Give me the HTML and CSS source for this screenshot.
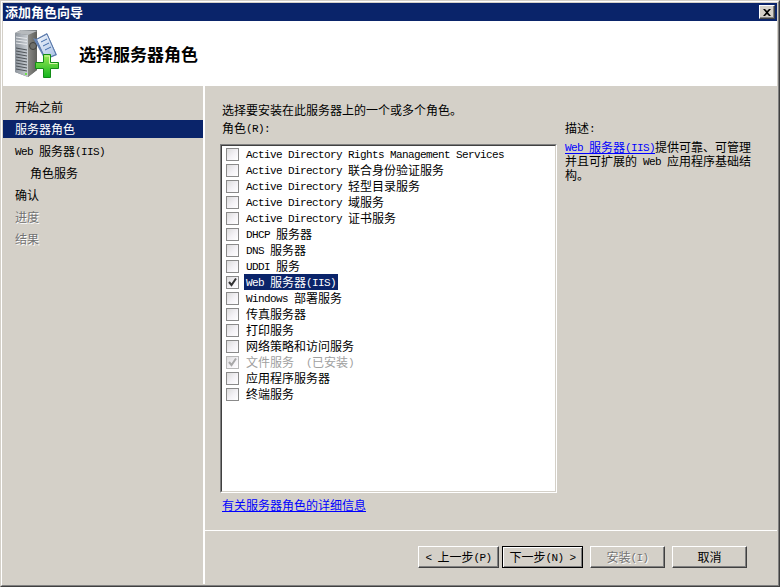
FILE: index.html
```html
<!DOCTYPE html>
<html lang="zh-CN">
<head>
<meta charset="utf-8">
<title>添加角色向导</title>
<link rel="stylesheet" href="styles.css">
</head>
<body>
<div class="window">
  <div class="window-inner">
    <div class="titlebar">
      <span class="title">添加角色向导</span>
      <button class="close" type="button" aria-label="关闭">
        <svg width="8" height="7" viewBox="0 0 8 7"><path d="M0 0h2l2 2 2-2h2L5 3.500 8 7H6L4 5 2 7H0l3-3.500z" fill="#000"/></svg>
      </button>
    </div>
    <header class="header">
      <svg class="logo" width="55" height="58" viewBox="10 25 55 58">
        <defs>
          <linearGradient id="front" x1="0" y1="0" x2="1" y2="0"><stop offset="0" stop-color="#8d949c"/><stop offset="1" stop-color="#c9ced3"/></linearGradient>
          <linearGradient id="side" x1="0" y1="0" x2="1" y2="0"><stop offset="0" stop-color="#8a8a86"/><stop offset="1" stop-color="#5f605c"/></linearGradient>
          <linearGradient id="green" x1="0" y1="0" x2="0" y2="1"><stop offset="0" stop-color="#9bea55"/><stop offset="1" stop-color="#14b51e"/></linearGradient>
          <linearGradient id="tag" x1="0" y1="0" x2="1" y2="1"><stop offset="0" stop-color="#f2f6fc"/><stop offset="1" stop-color="#a9c1e4"/></linearGradient>
        </defs>
        <path d="M15 33 21 30 37 30 37 70 28 77 15 72z" fill="#70767c"/>
        <path d="M15 33 28 35 28 77 15 72z" fill="url(#front)"/>
        <path d="M28 35 37 31 37 70 28 77z" fill="url(#side)"/>
        <path d="M15 33 21 30 37 31 28 35z" fill="#b6babd"/>
        <path d="M16 37 27 38.500M16 40 27 41.500M16 43 27 44.500" stroke="#e7e9ec" fill="none"/>
        <path d="M16 48 27 50M16 51 27 53M16 54 27 56M16 57 27 59M16 60 27 62M16 63 27 65M16 66 27 68M16 69 27 71" stroke="#4f5459" fill="none"/>
        <rect x="25" y="73" width="2" height="2" fill="#6fe04a"/>
        <circle cx="33" cy="46" r="3.500" fill="#6e6f6b" stroke="#3f403d"/>
        <path d="M33 38 36 39 47 33 57 55 45 60z" fill="#6684b4"/>
        <path d="M36.500 39.500 47 34 56 54.500 45.500 59z" fill="url(#tag)" stroke="#5a79ab"/>
        <path d="M41 42 47 39M43 46 49 43M45 50 51 47" stroke="#3f6aa8" fill="none"/>
        <path d="M43.500 54.500H50.500V62.500H58.500V68.500H50.500V77.500H43.500V68.500H35.500V62.500H43.500z" fill="url(#green)" stroke="#128c16"/>
        <path d="M44.500 56H49.500V63.500H57.500" fill="none" stroke="#d6f7a8"/>
      </svg>
      <h1 class="heading">选择服务器角色</h1>
    </header>
    <div class="body">
      <nav class="sidebar">
        <div class="step">开始之前</div>
        <div class="step is-current">服务器角色</div>
        <div class="step"><span class="en">Web </span>服务器<span class="en">(IIS)</span></div>
        <div class="step is-sub">角色服务</div>
        <div class="step">确认</div>
        <div class="step is-off">进度</div>
        <div class="step is-off">结果</div>
      </nav>
      <main class="main">
        <div class="content">
          <div class="left">
            <div class="intro">选择要安装在此服务器上的一个或多个角色。</div>
            <div class="intro roles-label">角色<span class="en">(R):</span></div>
            <div class="listbox">
              <div class="listbox-inner">
                <div class="row"><span class="check"></span><span class="label"><span class="en">Active Directory Rights Management Services</span></span></div>
                <div class="row"><span class="check"></span><span class="label"><span class="en">Active Directory </span>联合身份验证服务</span></div>
                <div class="row"><span class="check"></span><span class="label"><span class="en">Active Directory </span>轻型目录服务</span></div>
                <div class="row"><span class="check"></span><span class="label"><span class="en">Active Directory </span>域服务</span></div>
                <div class="row"><span class="check"></span><span class="label"><span class="en">Active Directory </span>证书服务</span></div>
                <div class="row"><span class="check"></span><span class="label"><span class="en">DHCP </span>服务器</span></div>
                <div class="row"><span class="check"></span><span class="label"><span class="en">DNS </span>服务器</span></div>
                <div class="row"><span class="check"></span><span class="label"><span class="en">UDDI </span>服务</span></div>
                <div class="row"><span class="check"><svg class="tick" width="11" height="11" viewBox="0 0 11 11"><path d="M2 5 4.500 8 9 1.500" fill="none" stroke="#333" stroke-width="2"/></svg></span><span class="label is-selected"><span class="en">Web </span>服务器<span class="en">(IIS)</span></span></div>
                <div class="row"><span class="check"></span><span class="label"><span class="en">Windows </span>部署服务</span></div>
                <div class="row"><span class="check"></span><span class="label">传真服务器</span></div>
                <div class="row"><span class="check"></span><span class="label">打印服务</span></div>
                <div class="row"><span class="check"></span><span class="label">网络策略和访问服务</span></div>
                <div class="row is-disabled"><span class="check"><svg class="tick" width="11" height="11" viewBox="0 0 11 11"><path d="M2 5 4.500 8 9 1.500" fill="none" stroke="#a8a8a8" stroke-width="2"/></svg></span><span class="label">文件服务<span class="en">  (</span>已安装<span class="en">)</span></span></div>
                <div class="row"><span class="check"></span><span class="label">应用程序服务器</span></div>
                <div class="row"><span class="check"></span><span class="label">终端服务</span></div>
              </div>
            </div>
            <a class="link more" href="#">有关服务器角色的详细信息</a>
          </div>
          <aside class="desc">
            <div>描述<span class="en">:</span></div>
            <p class="desc-text"><a class="link" href="#"><span class="en">Web </span>服务器<span class="en">(IIS)</span></a>提供可靠、可管理<br>并且可扩展的<span class="en"> Web </span>应用程序基础结<br>构。</p>
          </aside>
        </div>
        <footer class="footer">
          <button class="btn btn-wide" type="button"><span class="en">&lt; </span>上一步<span class="en">(P)</span></button>
          <button class="btn btn-wide btn-default" type="button">下一步<span class="en">(N) &gt;</span></button>
          <button class="btn btn-disabled" type="button">安装<span class="en">(I)</span></button>
          <button class="btn" type="button">取消</button>
        </footer>
      </main>
    </div>
  </div>
</div>
</body>
</html>
```
FILE: styles.css
```css
* { box-sizing: border-box; }
html, body { margin: 0; padding: 0; }
body {
  width: 780px;
  height: 587px;
  overflow: hidden;
  background: #d4d0c8;
  color: #000;
  font: 12px/14px "Noto Sans CJK SC", "Liberation Sans", sans-serif;
}
.en {
  font-family: "Liberation Mono", monospace;
  font-size: 11px;
  line-height: 1;
  letter-spacing: -0.6px;
  white-space: pre;
  vertical-align: 1px;
}
.window {
  width: 780px;
  height: 587px;
  border: 1px solid;
  border-color: #d4d0c8 #404040 #404040 #d4d0c8;
}
.window-inner {
  height: 100%;
  border: 1px solid;
  border-color: #fff #808080 #808080 #fff;
  padding: 1px;
  display: flex;
  flex-direction: column;
}
.titlebar {
  height: 18px;
  flex: none;
  background: #0a246a;
  color: #fff;
  display: flex;
  align-items: center;
  justify-content: space-between;
  padding: 0 2px;
}
.title { font-size: 13px; font-weight: 700; }
.close {
  width: 16px;
  height: 14px;
  padding: 0;
  background: #d4d0c8;
  border: 1px solid;
  border-color: #fff #404040 #404040 #fff;
  box-shadow: inset -1px -1px 0 #808080;
  display: flex;
  align-items: center;
  justify-content: center;
}
.header {
  height: 65px;
  flex: none;
  background: #fff;
  display: flex;
  align-items: center;
  gap: 14px;
  padding-left: 7px;
}
.logo { flex: none; }
.heading { margin: 0; font-size: 17px; line-height: 20px; font-weight: 700; }
.body { flex: 1; display: flex; min-height: 0; }
.sidebar {
  width: 202px;
  flex: none;
  border-right: 2px solid #fff;
  padding-top: 12px;
}
.step {
  height: 18px;
  line-height: 18px;
  margin-bottom: 4px;
  padding-left: 12px;
}
.step.is-current { background: #0a246a; color: #fff; }
.step.is-sub { padding-left: 27px; }
.step.is-off { color: #737373; text-shadow: 1px 1px 0 #fff; }
.main { flex: 1; min-width: 0; display: flex; flex-direction: column; }
.content { flex: 1; display: flex; gap: 8px; padding: 17px 0 0 15px; }
.left { width: 337px; flex: none; }
.intro { height: 14px; margin-left: 2px; margin-bottom: 4px; white-space: nowrap; }
.roles-label { margin-bottom: 9px; }
.listbox {
  height: 349px;
  border: 1px solid;
  border-color: #808080 #fff #fff #808080;
}
.listbox-inner {
  height: 100%;
  background: #fff;
  border: 1px solid;
  border-color: #404040 #d4d0c8 #d4d0c8 #404040;
  padding-left: 4px;
}
.row { height: 16px; display: flex; align-items: center; }
.check {
  width: 13px;
  height: 13px;
  flex: none;
  margin-right: 5px;
  border: 1px solid #8a8a8a;
  background: linear-gradient(135deg, #dcdcdc, #f4f2f6 55%, #fff);
}
.tick { display: block; }
.label { height: 16px; line-height: 16px; padding: 0 2px; white-space: nowrap; }
.label.is-selected { background: #0a246a; color: #fff; }
.row.is-disabled { color: #a0a0a0; }
.row.is-disabled .check { border-color: #b8b8b8; }
.link { color: #00f; text-decoration: underline; }
.more { display: block; margin: 5px 0 0 2px; }
.desc { padding-top: 18px; white-space: nowrap; }
.desc-text { margin: 5px 0 0; }
.footer {
  height: 54px;
  flex: none;
  border-top: 1px solid #fff;
  display: flex;
  justify-content: flex-end;
  align-items: flex-start;
  gap: 7px;
  padding: 15px 30px 0 0;
}
.btn {
  width: 75px;
  height: 22px;
  padding: 0;
  font: inherit;
  color: #000;
  background: #d4d0c8;
  border: 1px solid;
  border-color: #fff #404040 #404040 #fff;
  box-shadow: inset -1px -1px 0 #808080;
}
.btn-wide { width: 81px; }
.btn-wide + .btn-wide { margin-left: -4px; }
.btn-default {
  border-color: #000;
  box-shadow: inset 1px 1px 0 #fff, inset -1px -1px 0 #808080;
}
.btn-disabled { color: #737373; text-shadow: 1px 1px 0 #fff; }
```
